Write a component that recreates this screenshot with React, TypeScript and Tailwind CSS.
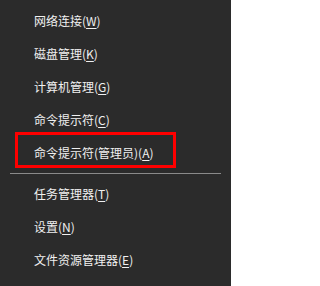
import React from "react";

type Item = { label: string; key: string; tail?: string };

const top: Item[] = [
  { label: "网络连接(", key: "W", tail: ")" },
  { label: "磁盘管理(", key: "K", tail: ")" },
  { label: "计算机管理(", key: "G", tail: ")" },
  { label: "命令提示符(", key: "C", tail: ")" },
  { label: "命令提示符(管理员)(", key: "A", tail: ")" },
];
const bottom: Item[] = [
  { label: "任务管理器(", key: "T", tail: ")" },
  { label: "设置(", key: "N", tail: ")" },
  { label: "文件资源管理器(", key: "E", tail: ")" },
];

function Row({ item }: { item: Item }) {
  return (
    <div className="h-[33px] flex items-center pl-[34px] text-[12px] text-[#f0f0f0] whitespace-nowrap">
      <span>
        {item.label}
        <span className="underline underline-offset-2">{item.key}</span>
        {item.tail}
      </span>
    </div>
  );
}

export default function App() {
  return (
    <div
      className="relative w-[231px] h-[286px] bg-[#2b2b2b] pt-[4px] overflow-hidden"
      style={{ fontFamily: '"Noto Sans CJK SC", "Noto Sans", sans-serif' }}
    >
      {top.map((it) => (
        <Row key={it.label} item={it} />
      ))}
      <div className="h-[8px] flex items-center px-[10px]">
        <div className="h-px w-full bg-[#8a8a8a]" />
      </div>
      {bottom.map((it) => (
        <Row key={it.label} item={it} />
      ))}
      <div className="absolute left-[15px] top-[132px] w-[161px] h-[36px] border-[3px] border-[#ff0000]" />
    </div>
  );
}
